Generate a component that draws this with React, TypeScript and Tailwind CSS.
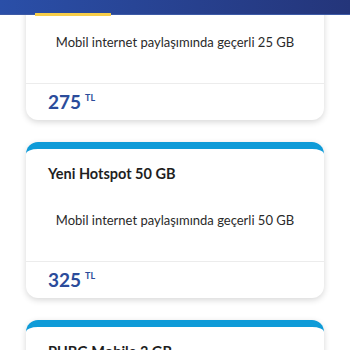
const packages = [
  { title: 'Yeni Hotspot 25 GB', desc: 'Mobil internet paylaşımında geçerli 25 GB', price: '275' },
  { title: 'Yeni Hotspot 50 GB', desc: 'Mobil internet paylaşımında geçerli 50 GB', price: '325' },
  { title: 'PUBG Mobile 3 GB', desc: 'PUBG Mobile oyununda geçerli 3 GB', price: '60' },
];

function PackageCard({ title, desc, price }: { title: string; desc: string; price: string }) {
  return (
    <div className="bg-white rounded-[12px] border-t-[7px] border-[#0e9bd8] shadow-[0_2px_6px_rgba(0,0,0,0.16)] overflow-hidden">
      <div className="px-[22px] pt-[15px]">
        <h3 className="text-[14.5px] leading-[20px] font-bold text-[#1f1f1f]">{title}</h3>
        <p className="mt-[27px] text-[13px] leading-[18px] text-[#2a2a2a] text-center">{desc}</p>
      </div>
      <div className="mt-[32px] border-t border-[#ececec] px-[22px] pt-[6px] pb-[6px] h-[37px] flex items-start">
        <span className="text-[19px] leading-[24px] font-bold text-[#2b4c9b]">{price}</span>
        <span className="ml-[4px] mt-[3px] text-[9px] leading-[10px] font-bold text-[#2b4c9b]">TL</span>
      </div>
    </div>
  );
}

export default function App() {
  return (
    <div
      className="relative w-[350px] h-[350px] overflow-hidden bg-white"
      style={{ fontFamily: 'Lato, "Noto Sans", sans-serif' }}
    >
      <div className="flex flex-col gap-[22px] px-[26px] mt-[-36px]">
        {packages.map((p) => (
          <PackageCard key={p.title} {...p} />
        ))}
      </div>

      <div className="absolute top-0 left-0 right-0 h-[15px] bg-gradient-to-r from-[#2a4fa8] to-[#24357a] border-b border-[#3d5aa6]">
        <div className="absolute left-[35px] top-[13px] w-[76px] h-[3px] bg-[#f7cd48]" />
      </div>
    </div>
  );
}
